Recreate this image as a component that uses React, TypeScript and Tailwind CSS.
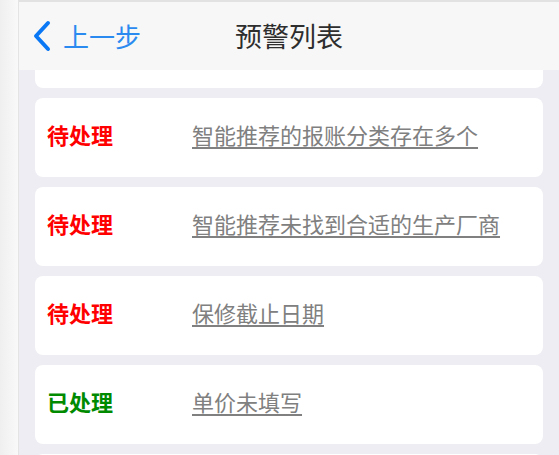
const alerts = [
  { status: '待处理', done: false, text: '智能推荐的报账分类存在多个' },
  { status: '待处理', done: false, text: '智能推荐的报账分类存在多个' },
  { status: '待处理', done: false, text: '智能推荐未找到合适的生产厂商' },
  { status: '待处理', done: false, text: '保修截止日期' },
  { status: '已处理', done: true, text: '单价未填写' },
  { status: '已处理', done: true, text: '单价未填写' },
];

function BackIcon() {
  return (
    <svg width="20" height="32" viewBox="0 0 20 32" fill="none">
      <path d="M16 3 L4 16 L16 29" stroke="#0a78f5" strokeWidth="4" strokeLinecap="round" strokeLinejoin="round" />
    </svg>
  );
}

export default function App() {
  return (
    <div className="flex h-[455px] w-[559px] overflow-hidden bg-[#f6f6f6] font-['Noto_Sans_CJK_SC','Noto_Sans',sans-serif]">
      {/* left gutter */}
      <div className="w-[19px] shrink-0 bg-gradient-to-r from-[#efefef] to-[#f9f9f9] border-r border-[#e4e4e4]" />

      <div className="flex flex-1 flex-col overflow-hidden border-t-2 border-[#e2e2e2] bg-[#ededf3]">
        <div className="grid h-[68px] shrink-0 grid-cols-[1fr_auto_1fr] items-center bg-[#f7f7f7] relative z-10">
          <div className="flex items-center pl-[13px]">
            <BackIcon />
            <span className="ml-[11px] text-[26px] leading-[32px] text-[#2a8af0]">上一步</span>
          </div>
          <div className="text-[27px] leading-[34px] text-[#2e2e2e]">预警列表</div>
          <div />
        </div>

        <div className="flex-1 overflow-hidden">
          <div className="-mt-[61px] flex flex-col gap-[10px] px-[16px]">
            {alerts.map((a, i) => (
              <div key={i} className="flex h-[79px] shrink-0 items-center rounded-[8px] bg-white pl-[12px] pb-[8px]">
                <span className={`w-[145px] shrink-0 text-[22px] font-bold leading-[28px] ${a.done ? 'text-[#008a00]' : 'text-[#ff0000]'}`}>
                  {a.status}
                </span>
                <span className="whitespace-nowrap text-[22px] leading-[28px] tracking-[0px] text-[#808080] underline underline-offset-[3px]">
                  {a.text}
                </span>
              </div>
            ))}
          </div>
        </div>
      </div>
    </div>
  );
}
